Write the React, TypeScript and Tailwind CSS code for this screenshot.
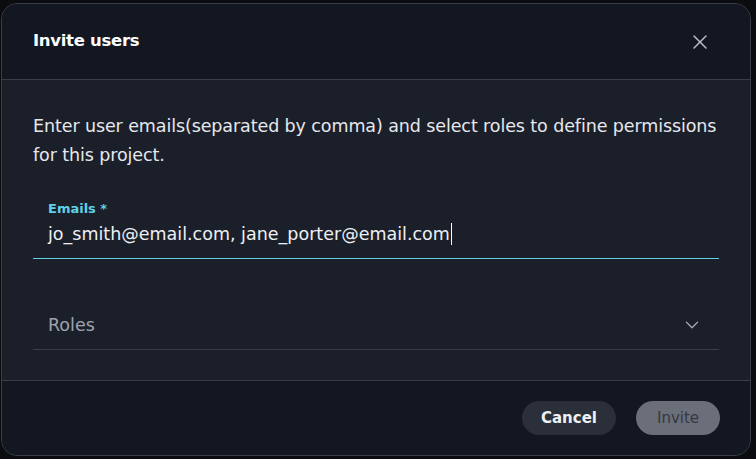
import { X, ChevronDown } from 'lucide-react';

export default function App() {
  return (
    <div
      className="h-[459px] w-[756px] bg-[#0b0c0f] pl-px pt-[3px] text-white"
      style={{ fontFamily: '"DejaVu Sans", "Noto Sans", sans-serif' }}
    >
      <div className="flex h-[453px] w-[750px] flex-col overflow-hidden rounded-[16px] border border-[#3a3d47] bg-[#1b1f2a]">
        {/* Header */}
        <div className="flex h-[76px] shrink-0 items-center justify-between border-b border-[#3a3d47] bg-[#131722] pl-[31px] pr-[38px]">
          <h2 className="text-[16.5px] font-bold tracking-[-0.3px]">Invite users</h2>
          <button className="text-[#b8bcc6]">
            <X size={24} strokeWidth={1.5} />
          </button>
        </div>

        {/* Body */}
        <div className="flex-1 px-[31px] pt-[32px]">
          <p className="text-[17.5px] leading-[29px] tracking-[-0.1px] text-[#e6e8ec]">
            Enter user emails(separated by comma) and select roles to define permissions
            <br />
            for this project.
          </p>

          <div className="mt-[30px] border-b border-[#5fd0e6]">
            <label className="block pl-[15px] text-[13px] font-semibold leading-[18px] text-[#5fd0e6]">
              Emails *
            </label>
            <div className="flex items-center pb-[10px] pl-[15px] pt-[2px] text-[17.5px] leading-[28px] text-[#eef0f3]">
              <span>jo_smith@email.com, jane_porter@email.com</span>
              <span className="ml-px inline-block h-[22px] w-px bg-white" />
            </div>
          </div>

          <div className="mt-[42px] flex h-[49px] items-center justify-between border-b border-[#3a3d47] pl-[15px] pr-[16px]">
            <span className="text-[17.5px] text-[#9ea3ad]">Roles</span>
            <ChevronDown size={22} strokeWidth={1.4} className="text-[#a3a8b2]" />
          </div>
        </div>

        {/* Footer */}
        <div className="flex h-[75px] shrink-0 items-center justify-end gap-[20px] border-t border-[#3a3d47] bg-[#131722] pr-[30px]">
          <button className="h-[34px] w-[94px] rounded-full bg-[#2a2f3a] text-[15px] font-semibold text-[#eef0f3]">
            Cancel
          </button>
          <button className="h-[34px] w-[84px] rounded-full bg-[#6b6f7a] text-[15px] text-[#353843]">
            Invite
          </button>
        </div>
      </div>
    </div>
  );
}
